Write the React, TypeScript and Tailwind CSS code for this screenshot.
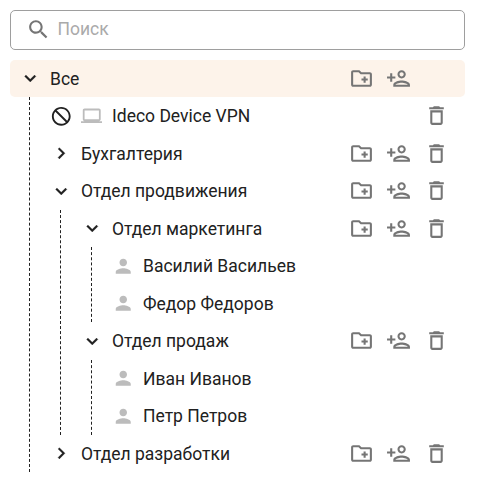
import type { ReactNode } from 'react';

const paths = {
  search:
    'M15.5 14h-.79l-.28-.27C15.41 12.59 16 11.11 16 9.5 16 5.91 13.09 3 9.5 3S3 5.91 3 9.5 5.91 16 9.5 16c1.61 0 3.09-.59 4.23-1.57l.27.28v.79l5 4.99L20.49 19l-4.99-5zm-6 0C7.01 14 5 11.99 5 9.5S7.01 5 9.5 5 14 7.01 14 9.5 11.99 14 9.5 14z',
  down: 'M16.59 8.59L12 13.17 7.41 8.59 6 10l6 6 6-6z',
  right: 'M10 6L8.59 7.41 13.17 12l-4.58 4.59L10 18l6-6z',
  block:
    'M12 2C6.48 2 2 6.48 2 12s4.48 10 10 10 10-4.48 10-10S17.52 2 12 2zM4 12c0-4.42 3.58-8 8-8 1.85 0 3.55.63 4.9 1.69L5.69 16.9C4.63 15.55 4 13.85 4 12zm8 8c-1.85 0-3.55-.63-4.9-1.69L18.31 7.1C19.37 8.45 20 10.15 20 12c0 4.42-3.58 8-8 8z',
  computer:
    'M20 18c1.1 0 1.99-.9 1.99-2L22 6c0-1.1-.9-2-2-2H4c-1.1 0-2 .9-2 2v10c0 1.1.9 2 2 2H0v2h24v-2h-4zM4 6h16v10H4V6z',
  person:
    'M12 12c2.21 0 4-1.79 4-4s-1.79-4-4-4-4 1.79-4 4 1.79 4 4 4zm0 2c-2.67 0-8 1.34-8 4v2h16v-2c0-2.66-5.33-4-8-4z',
  folder:
    'M20 6h-8l-2-2H4c-1.11 0-1.99.89-1.99 2L2 18c0 1.11.89 2 2 2h16c1.11 0 2-.89 2-2V8c0-1.11-.89-2-2-2zm0 12H4V6h5.17l2 2H20v10zm-8-4h2v2h2v-2h2v-2h-2v-2h-2v2h-2z',
  addUser:
    'M15 12c2.21 0 4-1.79 4-4s-1.79-4-4-4-4 1.79-4 4 1.79 4 4 4zm0-6c1.1 0 2 .9 2 2s-.9 2-2 2-2-.9-2-2 .9-2 2-2zm0 8c-2.67 0-8 1.34-8 4v2h16v-2c0-2.66-5.33-4-8-4zm-6 4c.22-.72 3.31-2 6-2 2.7 0 5.8 1.29 6 2H9zm-3-3v-3h3v-2H6V7H4v3H1v2h3v3z',
  trash:
    'M6 19c0 1.1.9 2 2 2h8c1.1 0 2-.9 2-2V7H6v12zM8 9h8v10H8V9zm7.5-5l-1-1h-5l-1 1H5v2h14V4z',
};

function Icon({ name, className }: { name: keyof typeof paths; className: string }) {
  return (
    <svg viewBox="0 0 24 24" fill="currentColor" className={`shrink-0 ${className}`}>
      <path d={paths[name]} />
    </svg>
  );
}

const leadStyles = {
  down: 'size-[22.5px] stroke-current stroke-[0.3]',
  right: 'size-[22.5px] stroke-current stroke-[0.3]',
  computer: 'size-[21.5px] text-[#bcbcbc]',
};

function Row({
  label,
  icon,
  blocked = false,
  group = false,
  root = false,
}: {
  label: string;
  icon: 'down' | 'right' | 'computer';
  blocked?: boolean;
  group?: boolean;
  root?: boolean;
}) {
  return (
    <div
      className={`flex items-center pr-4 pl-[9px] ${root ? 'h-[37px] rounded-[5px] bg-[#fdf3ea]' : 'h-[37.5px]'}`}
    >
      {blocked && <Icon name="block" className="mr-2 size-[22.5px] -scale-x-100" />}
      <Icon name={icon} className={leadStyles[icon]} />
      <span className={`grow pt-px whitespace-nowrap ${blocked ? 'ml-[10px]' : 'ml-[8.5px]'}`}>{label}</span>
      <span className="flex items-center text-[#757575]">
        {group && <Icon name="folder" className="mr-3 size-[25px]" />}
        {group && <Icon name="addUser" className="mr-[13px] size-[25px]" />}
        {root ? <span className="w-[25px]" /> : <Icon name="trash" className="size-[25px]" />}
      </span>
    </div>
  );
}

function UserRow({ label }: { label: string }) {
  return (
    <div className="flex h-[37.5px] items-center pl-[9px]">
      <Icon name="person" className="size-[22.5px] text-[#bcbcbc]" />
      <span className="ml-[8.5px] pt-px whitespace-nowrap">{label}</span>
    </div>
  );
}

function Branch({ children }: { children: ReactNode }) {
  return <div className="ml-[19px] border-l border-dashed border-[#212121] pl-[11px]">{children}</div>;
}

export default function App() {
  return (
    <div className="h-[480px] w-[491px] bg-white pt-2.5 pr-[26px] pl-2.5 font-['Roboto',sans-serif] text-[17.5px] text-[#212121]">
      <label className="mb-2.5 flex h-10 items-center rounded-[5px] border border-[#9e9e9e] pb-[2px] pl-[15px]">
        <Icon name="search" className="size-[25px] text-[#757575]" />
        <input
          placeholder="Поиск"
          className="ml-[6.5px] min-w-0 grow bg-transparent outline-none placeholder:text-[#aaaaaa]"
        />
      </label>
      <Row label="Все" icon="down" group root />
      <Branch>
        <Row label="Ideco Device VPN" icon="computer" blocked />
        <Row label="Бухгалтерия" icon="right" group />
        <Row label="Отдел продвижения" icon="down" group />
        <Branch>
          <Row label="Отдел маркетинга" icon="down" group />
          <Branch>
            <UserRow label="Василий Васильев" />
            <UserRow label="Федор Федоров" />
          </Branch>
          <Row label="Отдел продаж" icon="down" group />
          <Branch>
            <UserRow label="Иван Иванов" />
            <UserRow label="Петр Петров" />
          </Branch>
        </Branch>
        <Row label="Отдел разработки" icon="right" group />
      </Branch>
    </div>
  );
}
